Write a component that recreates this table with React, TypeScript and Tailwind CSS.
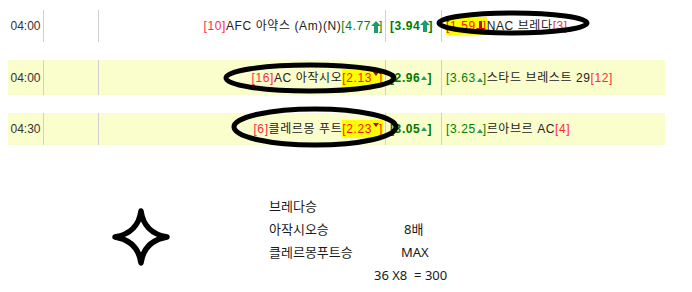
import React from "react";

type Row = {
  time: string;
  bg: string;
  h: string;
  mt: string;
  homeRank: string;
  home: string;
  homeOdd: string;
  homeMark: "up" | "down" | "tri";
  homeHi: boolean;
  draw: string;
  drawMark: "up" | "tri";
  awayOdd: string;
  awayMark: "down" | "tri";
  awayHi: boolean;
  away: string;
  awayRank: string;
};

const rows: Row[] = [
  {
    time: "04:00", bg: "bg-white", h: "h-[32px]", mt: "mt-[10px]",
    homeRank: "10", home: "AFC 아약스 (Am)(N)", homeOdd: "4.77", homeMark: "up", homeHi: false,
    draw: "3.94", drawMark: "up",
    awayOdd: "1.59", awayMark: "down", awayHi: true, away: "NAC 브레다", awayRank: "3",
  },
  {
    time: "04:00", bg: "bg-[#fafdcc]", h: "h-[35px]", mt: "mt-[18px]",
    homeRank: "16", home: "AC 아작시오", homeOdd: "2.13", homeMark: "down", homeHi: true,
    draw: "2.96", drawMark: "tri",
    awayOdd: "3.63", awayMark: "tri", awayHi: false, away: "스타드 브레스트 29", awayRank: "12",
  },
  {
    time: "04:30", bg: "bg-[#fafdcc]", h: "h-[32px]", mt: "mt-[18px]",
    homeRank: "6", home: "클레르몽 푸트", homeOdd: "2.23", homeMark: "down", homeHi: true,
    draw: "3.05", drawMark: "tri",
    awayOdd: "3.25", awayMark: "tri", awayHi: false, away: "르아브르 AC", awayRank: "4",
  },
];

// big teal arrow (row 1)
function UpArrow() {
  return (
    <svg width="10" height="12" viewBox="0 0 10 12" className="inline-block -mr-[2px] align-[-3px]">
      <path d="M5 0 L10 5 L7 5 L7 12 L3 12 L3 5 L0 5 Z" fill="#1b9c70" />
    </svg>
  );
}

function DownArrow() {
  return (
    <svg width="9" height="13" viewBox="0 0 9 13" className="inline-block -mr-[2px] align-[-4px]">
      <path d="M3 0 L6 0 L6 7 L9 7 L4.5 13 L0 7 L3 7 Z" fill="#b3102c" />
    </svg>
  );
}

// tiny green triangle at the baseline
function TinyUp() {
  return (
    <svg width="6" height="4" viewBox="0 0 6 4" className="inline-block align-[0px] ml-[1px]">
      <path d="M3 0 L6 4 L0 4 Z" fill="#2a9a68" />
    </svg>
  );
}

// tiny dark-red triangle at the top
function TinyDown() {
  return (
    <svg width="6" height="4" viewBox="0 0 6 4" className="inline-block align-[6px] ml-[1px]">
      <path d="M0 0 L6 0 L3 4 Z" fill="#9a1020" />
    </svg>
  );
}

function Mark({ m }: { m: "up" | "down" | "tri" }) {
  if (m === "up") return <UpArrow />;
  if (m === "down") return <DownArrow />;
  return <TinyUp />;
}

export default function App() {
  return (
    <div className="relative w-[692px] h-[292px] bg-white overflow-hidden font-['Liberation_Sans','Noto_Sans_CJK_KR',sans-serif] text-[12px] text-[#222]">
      {/* ── odds table ── */}
      <div className="pl-[8px] tracking-[0.6px]">
        {rows.map((r, i) => (
          <div key={i} className={`flex w-[657px] ${r.h} ${r.mt} ${r.bg}`}>
            <div className="w-[35px] flex items-center justify-center text-[#333] tracking-normal">{r.time}</div>
            <div className="w-[55px] border-l border-[#d0d0d0]" />
            <div className="w-[287px] border-l border-[#d0d0d0] flex items-center justify-end pr-[2px] whitespace-nowrap">
              <span className="text-[#ff2a40]">[{r.homeRank}]</span>
              <span>{r.home}</span>
              {r.homeHi ? (
                <span className="bg-[#ffff00] text-[#ff1010]">
                  [{r.homeOdd}
                  <TinyDown />]
                </span>
              ) : (
                <span className="text-[#008000]">
                  [{r.homeOdd}
                  <Mark m={r.homeMark} />]
                </span>
              )}
            </div>
            <div className="w-[56px] border-l border-[#d0d0d0] flex items-center pl-[4px] font-bold text-[#007a00] whitespace-nowrap">
              [{r.draw}
              <Mark m={r.drawMark} />]
            </div>
            <div className="w-[224px] border-l border-[#d0d0d0] flex items-center pl-[4px] whitespace-nowrap">
              {r.awayHi ? (
                <span className="bg-[#ffff00] text-[#ff1010]">
                  [{r.awayOdd}
                  <Mark m={r.awayMark} />]
                </span>
              ) : (
                <span className="text-[#008000]">
                  [{r.awayOdd}
                  <Mark m={r.awayMark} />]
                </span>
              )}
              <span>{r.away}</span>
              <span className="text-[#ff2a40]">[{r.awayRank}]</span>
            </div>
          </div>
        ))}
      </div>

      {/* ── summary ── */}
      <div className="flex mt-[50px] pl-[111px] font-['Noto_Sans','Noto_Sans_CJK_KR',sans-serif] text-[13px] text-[#1a1a1a]">
        <svg width="60" height="60" viewBox="0 0 60 60" className="mt-[12px] shrink-0">
          <path
            d="M30 4 Q33 26 56 30 Q33 34 30 56 Q27 34 4 30 Q27 26 30 4 Z"
            fill="white"
            stroke="black"
            strokeWidth="5.5"
            strokeLinejoin="round"
          />
        </svg>
        <div className="ml-[98px] leading-[23px]">
          <div>브레다승</div>
          <div className="flex">
            <span className="w-[135px]">아작시오승</span>
            <span>8배</span>
          </div>
          <div className="flex">
            <span className="w-[132px]">클레르몽푸트승</span>
            <span>MAX</span>
          </div>
          <div className="pl-[105px] whitespace-pre">36 X8  = 300</div>
        </div>
      </div>

      {/* hand-drawn circles over the picks */}
      <svg width="692" height="292" className="absolute top-0 left-0 pointer-events-none">
        <ellipse cx="513" cy="23" rx="74" ry="10" fill="none" stroke="black" strokeWidth="5" />
        <ellipse cx="310" cy="78" rx="84" ry="13" fill="none" stroke="black" strokeWidth="5" />
        <ellipse cx="315" cy="127" rx="81" ry="18" fill="none" stroke="black" strokeWidth="5" />
      </svg>
    </div>
  );
}
